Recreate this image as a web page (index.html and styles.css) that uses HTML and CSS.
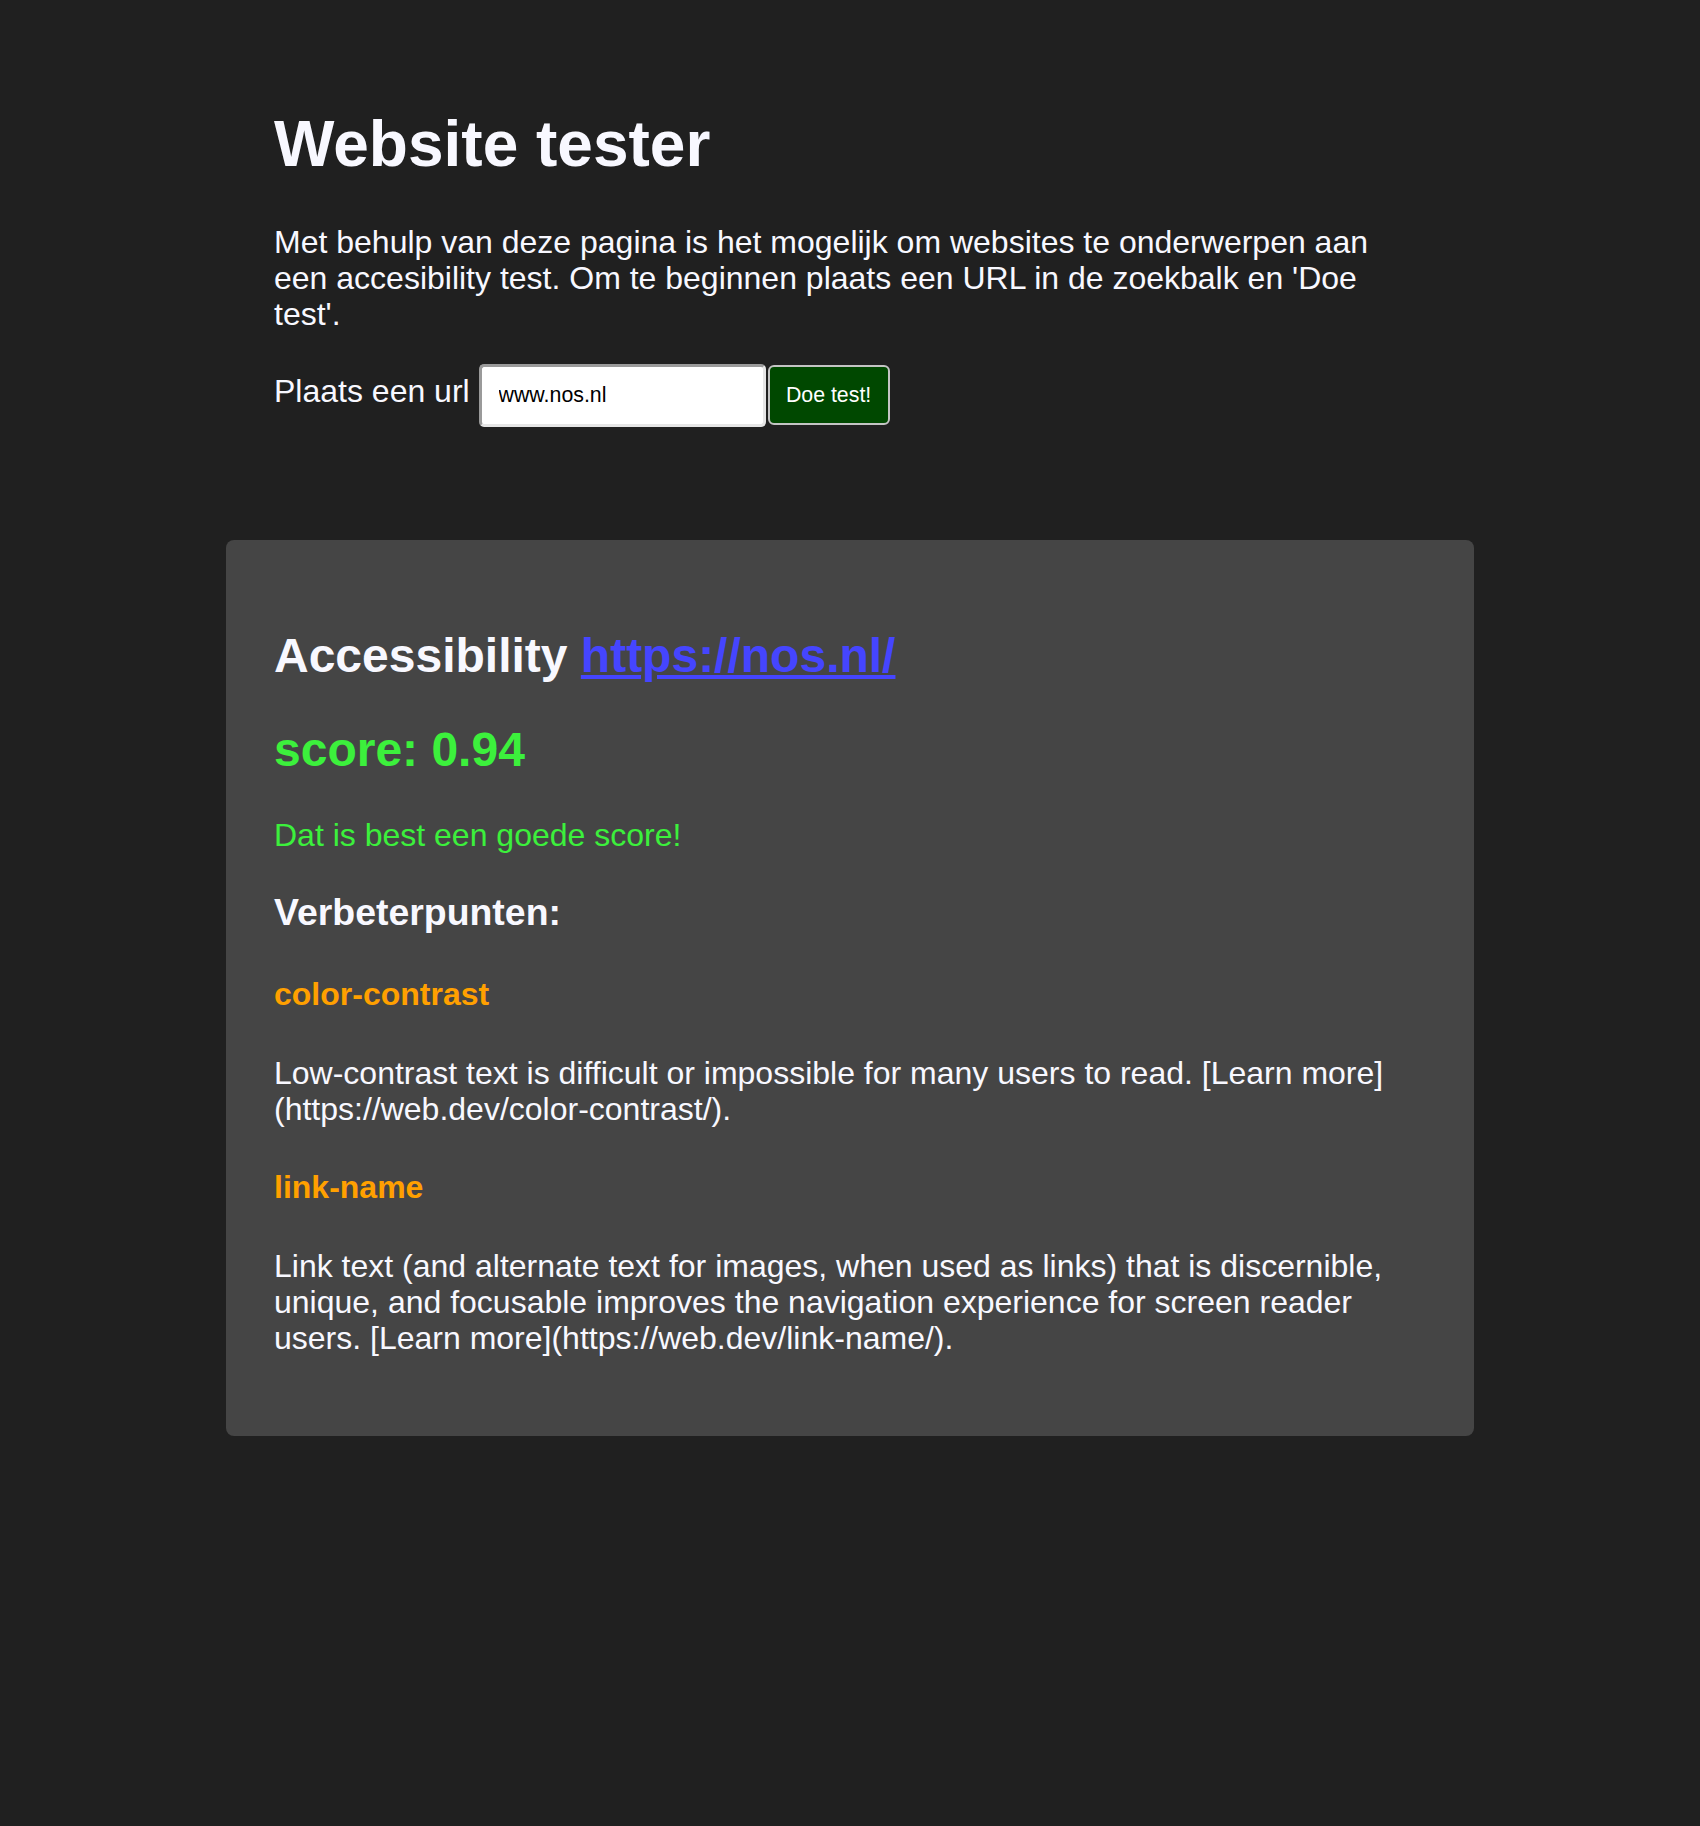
FILE: index.html
```html
<!DOCTYPE html>
<html lang="nl">
<head>
<meta charset="utf-8">
<title>Website tester</title>
<link rel="stylesheet" href="styles.css">
</head>
<body>
<div class="page">
  <section class="intro">
    <h1>Website tester</h1>
    <p>Met behulp van deze pagina is het mogelijk om websites te onderwerpen aan een accesibility test. Om te beginnen plaats een URL in de zoekbalk en 'Doe test'.</p>
    <form class="url-form">
      <label for="url">Plaats een url</label> <input id="url" class="url-input" type="text" value="www.nos.nl"><button type="button" class="test-btn">Doe test!</button>
    </form>
  </section>
  <section class="card">
    <h2>Accessibility <a href="https://nos.nl/" class="site-link">https://nos.nl/</a></h2>
    <h2 class="score">score: 0.94</h2>
    <p class="verdict">Dat is best een goede score!</p>
    <h3>Verbeterpunten:</h3>
    <h4 class="issue">color-contrast</h4>
    <p>Low-contrast text is difficult or impossible for many users to read. [Learn more](https://web.dev/color-contrast/).</p>
    <h4 class="issue">link-name</h4>
    <p>Link text (and alternate text for images, when used as links) that is discernible, unique, and focusable improves the navigation experience for screen reader users. [Learn more](https://web.dev/link-name/).</p>
  </section>
</div>
</body>
</html>
```

FILE: styles.css
```css
html {
  background: #202020;
}

body {
  margin: 0;
  min-height: 1826px;
  background: #202020;
  color: #f8f8ff;
  font-family: "Liberation Sans", Arial, sans-serif;
  font-size: 32px;
  line-height: 36px;
}

.page {
  width: 1248px;
  margin: 0 auto;
  padding-top: 64px;
}

.intro {
  padding: 0 48px;
}

h1 {
  font-size: 64px;
  line-height: normal;
  margin: 42.88px 0;
}

p {
  margin: 32px 0;
}

.url-form {
  margin: 32px 0 0;
}

.url-input {
  box-sizing: border-box;
  width: 287px;
  height: 63px;
  margin: 0;
  padding: 0 17px;
  font-family: "Liberation Sans", Arial, sans-serif;
  font-size: 21.33px;
  line-height: normal;
  color: #000;
  background: #fff;
  border: 3px solid;
  border-color: #9a9a9a #e6e6e6 #e6e6e6 #9a9a9a;
  border-radius: 5px;
  outline: none;
}

.test-btn {
  box-sizing: border-box;
  width: 122px;
  height: 60px;
  margin: 0 0 0 2px;
  padding: 0;
  font-family: "Liberation Sans", Arial, sans-serif;
  font-size: 21.33px;
  line-height: normal;
  color: #fff;
  background: #004800;
  border: 2px solid #c4c4c4;
  border-radius: 6px;
}

.card {
  margin-top: 113px;
  padding: 48px;
  background: #454545;
  border-radius: 8px;
}

h2 {
  font-size: 48px;
  line-height: normal;
  margin: 39.84px 0;
}

.site-link {
  color: #4545ff;
}

.score {
  color: #3cf03c;
}

.verdict {
  color: #3cf03c;
}

h3 {
  font-size: 37.44px;
  line-height: normal;
  margin: 37.44px 0;
}

h4 {
  font-size: 32px;
  margin: 42.56px 0;
}

.issue {
  color: #ffa000;
}
```
